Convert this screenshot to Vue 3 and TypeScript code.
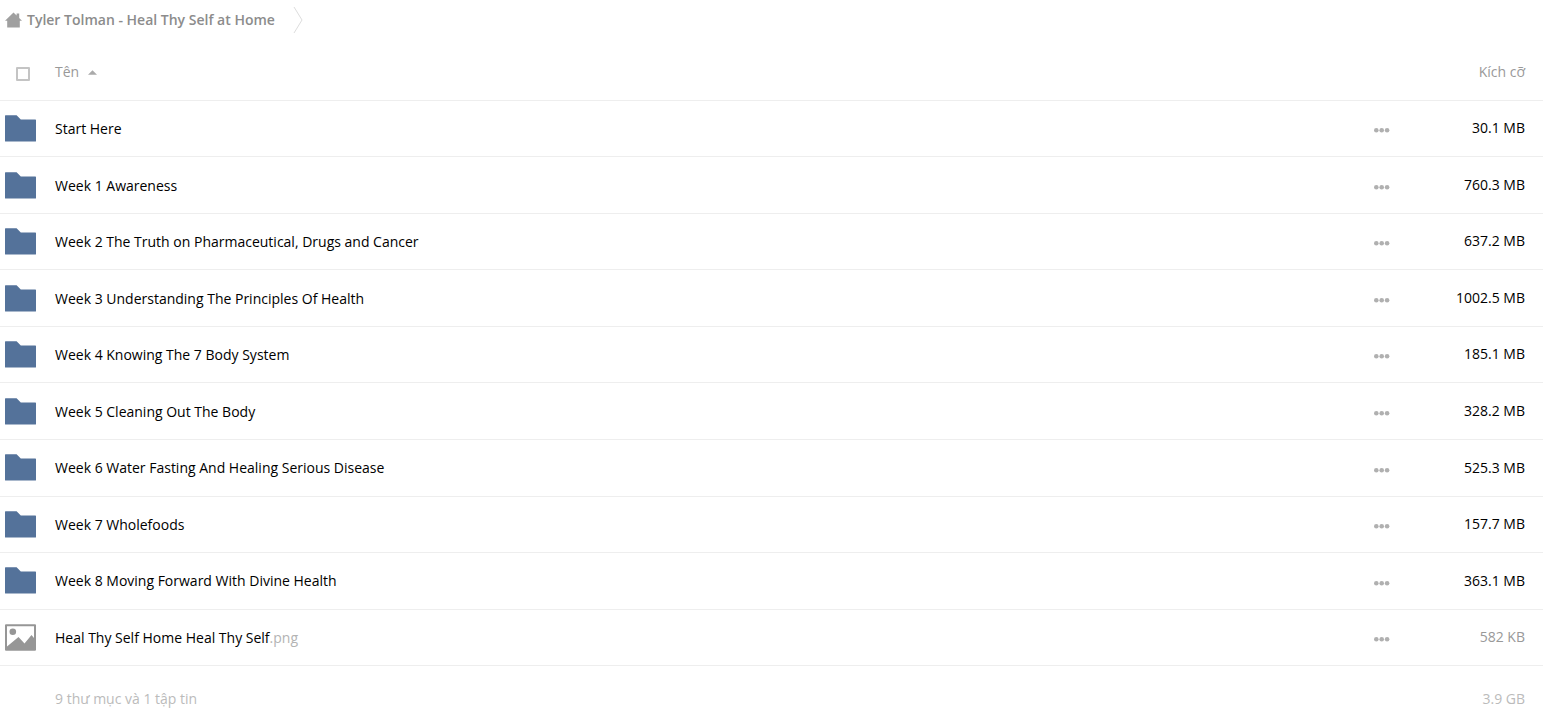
<script setup lang="ts">
import { ref } from 'vue'

interface FileEntry {
  name: string
  ext?: string
  size: string
  kind: 'folder' | 'image'
}

const allSelected = ref(false)

const files: FileEntry[] = [
  { name: 'Start Here', size: '30.1 MB', kind: 'folder' },
  { name: 'Week 1 Awareness', size: '760.3 MB', kind: 'folder' },
  { name: 'Week 2 The Truth on Pharmaceutical, Drugs and Cancer', size: '637.2 MB', kind: 'folder' },
  { name: 'Week 3 Understanding The Principles Of Health', size: '1002.5 MB', kind: 'folder' },
  { name: 'Week 4 Knowing The 7 Body System', size: '185.1 MB', kind: 'folder' },
  { name: 'Week 5 Cleaning Out The Body', size: '328.2 MB', kind: 'folder' },
  { name: 'Week 6 Water Fasting And Healing Serious Disease', size: '525.3 MB', kind: 'folder' },
  { name: 'Week 7 Wholefoods', size: '157.7 MB', kind: 'folder' },
  { name: 'Week 8 Moving Forward With Divine Health', size: '363.1 MB', kind: 'folder' },
  { name: 'Heal Thy Self Home Heal Thy Self', ext: '.png', size: '582 KB', kind: 'image' },
]
</script>

<template>
  <main class="files">
    <nav class="crumbs">
      <a class="crumb" href="#">
        <svg class="home" viewBox="0 0 17 16" aria-hidden="true">
          <path d="M8.5 0.5L0 8.7h2.2V15.5h12.6V8.7H17L14.2 6V1.5h-2.6v2z" />
        </svg>
        <span>Tyler Tolman - Heal Thy Self at Home</span>
      </a>
      <svg class="divider" viewBox="0 0 10 28" aria-hidden="true">
        <path d="M1 1L9 14L1 27" />
      </svg>
    </nav>

    <table class="list">
      <thead>
        <tr>
          <th class="pick">
            <input v-model="allSelected" class="check" type="checkbox" aria-label="Tên" />
          </th>
          <th class="name">
            <button class="sort" type="button">
              Tên
              <svg class="caret" viewBox="0 0 10 5" aria-hidden="true"><path d="M0 5L5 0L10 5z" /></svg>
            </button>
          </th>
          <th class="actions"></th>
          <th class="size"><button class="sort" type="button">Kích cỡ</button></th>
        </tr>
      </thead>
      <tbody>
        <tr v-for="file in files" :key="file.name">
          <td class="pick">
            <svg v-if="file.kind === 'folder'" class="thumb" viewBox="0 1 32 28" aria-hidden="true">
              <path class="folder" d="M0.6 1.2h11l4.2 4.4H30.4q0.6 0 0.6 0.6V27q0 0.6-0.6 0.6H0.6Q0 27.6 0 27V1.8Q0 1.2 0.6 1.2z" />
            </svg>
            <svg v-else class="thumb" viewBox="0 1 32 28" aria-hidden="true">
              <path
                class="image"
                fill-rule="evenodd"
                d="M1 1.2h29q1 0 1 1v24.6q0 1-1 1H1q-1 0-1-1V2.2q0-1 1-1zM2 3.2v20.3L13.5 14L19.5 20.5L26.5 12L29 15V3.2z"
              />
              <circle class="image" cx="7.8" cy="8.8" r="3.3" />
            </svg>
          </td>
          <td class="name">
            <a class="link" href="#">{{ file.name }}<span v-if="file.ext" class="ext">{{ file.ext }}</span></a>
          </td>
          <td class="actions">
            <button class="more" type="button" :aria-label="file.name">
              <svg class="dots" viewBox="0 0 16 6" aria-hidden="true">
                <circle cx="2.3" cy="3.3" r="2.3" />
                <circle cx="7.7" cy="3.3" r="2.3" />
                <circle cx="13.1" cy="3.3" r="2.3" />
              </svg>
            </button>
          </td>
          <td class="size" :class="{ small: file.kind === 'image' }">{{ file.size }}</td>
        </tr>
      </tbody>
      <tfoot>
        <tr>
          <td class="pick"></td>
          <td class="name">9 thư mục và 1 tập tin</td>
          <td class="actions"></td>
          <td class="size">3.9 GB</td>
        </tr>
      </tfoot>
    </table>
  </main>
</template>

<style>
body {
  margin: 0;
  background: #fff;
}
</style>

<style scoped>
.files {
  font-family: 'Open Sans', 'Noto Sans', sans-serif;
  font-size: 14px;
  line-height: 20px;
  color: #000;
}

.crumbs {
  display: flex;
  align-items: center;
  height: 40px;
  padding-left: 5px;
}

.crumb {
  display: flex;
  align-items: center;
  gap: 5px;
  color: #8c8c8c;
  font-weight: 600;
  text-decoration: none;
}

.home {
  width: 17px;
  height: 16px;
  fill: #a0a0a0;
}

.divider {
  width: 10px;
  height: 28px;
  margin-left: 18px;
  fill: none;
  stroke: #ddd;
}

.list {
  width: 100%;
  table-layout: fixed;
  border-collapse: separate;
  border-spacing: 0;
}

th,
td {
  box-sizing: border-box;
  padding: 0;
  text-align: left;
  font-weight: 400;
  vertical-align: middle;
}

thead th,
tbody td {
  border-bottom: 1px solid #eee;
}

thead th {
  height: 61px;
  padding-top: 4px;
  color: #999;
}

tbody td {
  height: 56px;
}

tbody tr:nth-child(even):nth-child(-n + 6) td,
tbody tr:nth-child(2n + 7) td {
  height: 57px;
}

tbody tr:nth-child(even):nth-child(-n + 6) td:not(.size) {
  padding-top: 1px;
}

tfoot td {
  height: 53px;
  padding-top: 13px;
  color: #bbb;
}

th.pick,
td.pick {
  width: 54px;
}

.name {
  padding-left: 1px;
}

.actions {
  width: 60px;
}

th.size,
td.size {
  width: 118px;
  padding-right: 18px;
  text-align: right;
}

tbody td.size {
  padding-bottom: 1px;
}

td.small {
  color: #999;
}

.check {
  display: block;
  box-sizing: border-box;
  width: 14px;
  height: 14px;
  margin: 4px 0 0 16px;
  appearance: none;
  border: 2px solid #c4c4c4;
  border-radius: 1px;
  background: #fff;
}

.sort,
.more {
  padding: 0;
  border: 0;
  background: none;
  color: inherit;
  font: inherit;
}

.caret {
  width: 9px;
  height: 5px;
  margin: 0 0 1px 5px;
  vertical-align: middle;
  fill: #aaa;
}

.thumb {
  display: block;
  width: 32px;
  height: 28px;
  margin-left: 5px;
}

.folder {
  fill: #54729a;
}

.image {
  fill: #969696;
}

.link {
  color: inherit;
  text-decoration: none;
}

.ext {
  color: #b3b3b3;
}

.more {
  display: block;
  padding: 3px 0 0 9px;
}

.dots {
  display: block;
  width: 16px;
  height: 6px;
  fill: #b0b0b0;
}
</style>
